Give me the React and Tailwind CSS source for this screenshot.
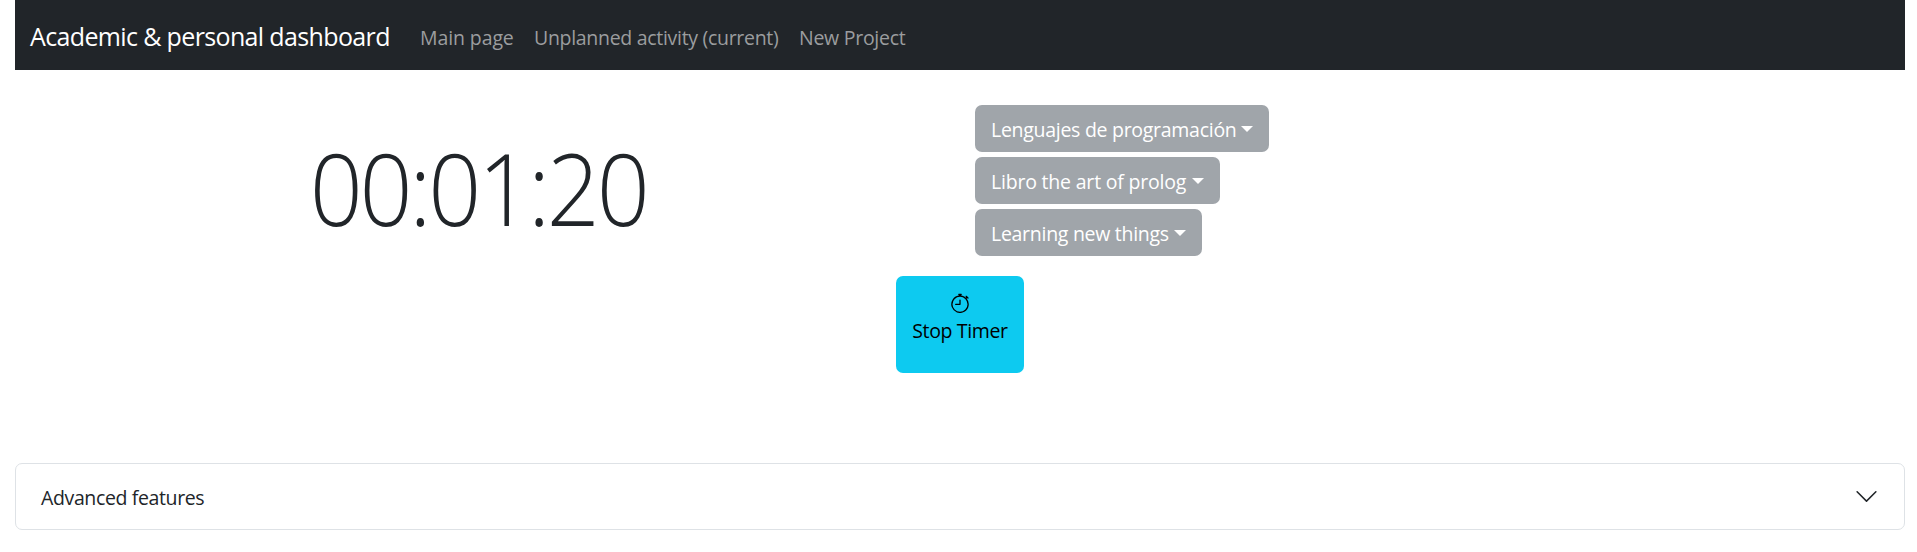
import { BsStopwatch } from "react-icons/bs";

const dropdowns = [
  { label: "Lenguajes de programación", width: "w-[294px]", text: "tracking-[-0.28px]" },
  { label: "Libro the art of prolog", width: "w-[245px]", text: "tracking-[-0.2px]" },
  { label: "Learning new things", width: "w-[227px]", text: "tracking-[-0.28px]" },
];

function Navbar() {
  return (
    <nav className="flex h-[70px] items-center bg-[#212529] pl-[15px] pt-1 whitespace-nowrap">
      <a className="w-[390px] text-[25px] tracking-[-0.64px] text-white">Academic &amp; personal dashboard</a>
      <div className="flex pt-px text-[19.5px] text-[#9b9d9f]">
        <a className="w-[114px] tracking-[-0.1px]">Main page</a>
        <a className="w-[265px] tracking-[-0.3px]">Unplanned activity (current)</a>
        <a className="tracking-[-0.27px]">New Project</a>
      </div>
    </nav>
  );
}

function Dropdown({ label, width, text }) {
  return (
    <button className={`flex h-[47px] ${width} items-center justify-between rounded-[7px] bg-[#a0a5aa] px-4 whitespace-nowrap text-white`}>
      <span className={`pt-[3px] text-[19.5px] ${text}`}>{label}</span>
      <span className="h-0 w-0 border-x-[6px] border-t-[6px] border-x-transparent border-t-white" />
    </button>
  );
}

export default function App() {
  return (
    <div className="h-[552px] bg-white px-[15px] pr-[12px] font-['Open_Sans','Noto_Sans',sans-serif] text-[#212529]">
      <Navbar />
      <main className="grid grid-cols-2 pt-[35px]">
        <div className="flex justify-center pt-[22px] pr-[18px]">
          <h1 className="scale-x-[0.93] text-[100px] leading-[120px] font-light tracking-[-3.5px]">00:01:20</h1>
        </div>
        <div className="flex flex-col items-start gap-[5px] pl-[15px]">
          {dropdowns.map((d) => (
            <Dropdown key={d.label} {...d} />
          ))}
        </div>
      </main>
      <div className="flex justify-center pt-[20px]">
        <button className="flex h-[97px] w-[128px] flex-col items-center rounded-[7px] bg-[#0dcaf0] pt-[17px] text-black">
          <BsStopwatch className="h-5 w-5" />
          <span className="text-[19.5px] leading-[36px] tracking-[-0.35px]">Stop Timer</span>
        </button>
      </div>
      <button className="mt-[90px] flex h-[67px] w-full items-center justify-between rounded-[7px] border border-[#dee2e6] pr-[25px] pl-[25px]">
        <span className="pt-[3px] text-[19.5px] tracking-[-0.37px]">Advanced features</span>
        <svg className="h-[25px] w-[25px]" viewBox="0 0 16 16" fill="#212529">
          <path fillRule="evenodd" d="M1.646 4.646a.5.5 0 0 1 .708 0L8 10.293l5.646-5.647a.5.5 0 0 1 .708.708l-6 6a.5.5 0 0 1-.708 0l-6-6a.5.5 0 0 1 0-.708z" />
        </svg>
      </button>
    </div>
  );
}
